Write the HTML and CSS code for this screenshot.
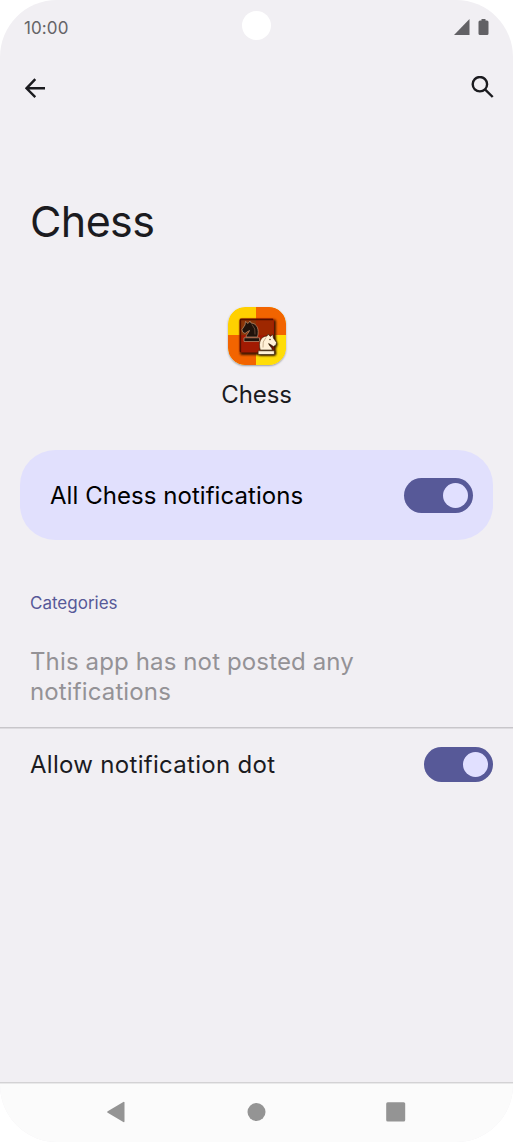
FILE: index.html
```
<!DOCTYPE html>
<html lang="en">
<head>
    <meta charset="UTF-8">
    <meta name="viewport" content="width=device-width, initial-scale=1.0">
    <title>Chess notifications</title>
    <link rel="stylesheet" href="styles.css">
</head>
<body>

<div class="phone">
    <header class="status-bar">
        <span class="clock">10:00</span>
        <span class="camera"></span>
        <svg class="status-icons" width="36" height="17" viewBox="0 0 36 17">
            <path d="M0 16 15.500 0V16z"/>
            <path d="M27.500 0h4v1.500h1.500q1.500 0 1.500 1.500v11.500q0 1.500-1.500 1.500h-7q-1.500 0-1.500-1.500V3q0-1.500 1.500-1.500h1.500z"/>
        </svg>
    </header>

    <div class="toolbar">
        <svg width="22" height="20" viewBox="0 0 22 20">
            <path d="M21 10.300H2.500M11.300 1.200 2.500 10.300l8.800 8.800"/>
        </svg>
        <svg class="search" width="23" height="23" viewBox="0 0 23 23">
            <circle cx="8.900" cy="8.200" r="7.200"/>
            <path d="M14 13.300l7.700 7.700"/>
        </svg>
    </div>

    <h1 class="title">Chess</h1>

    <div class="app">
        <svg class="app-icon" width="58" height="58" viewBox="0 0 58 58">
            <defs>
                <clipPath id="tile"><rect width="58" height="58" rx="17"/></clipPath>
                <filter id="soft" x="-30%" y="-30%" width="160%" height="160%">
                    <feGaussianBlur stdDeviation="1.2"/>
                </filter>
                <g id="knight">
                    <path d="M4 16c0-2.500 3-4 3.500-6.500l-2.500 1.500-2 1.500-2.500-1.500L0 8.500 3 4l.500-3.500 2.500 2L8 0l1 2c6 .5 8.500 6 6.500 14z"/>
                    <path d="M2 16.800h15.500v3.700H2z"/>
                </g>
            </defs>
            <g clip-path="url(#tile)">
                <rect width="58" height="58" fill="#ffd000"/>
                <rect x="28" width="30" height="28" fill="#f26400"/>
                <rect y="28" width="28" height="30" fill="#f26400"/>
                <rect x="28" y="28" width="30" height="30" fill="#ffdd08"/>
            </g>
            <rect x="12" y="12.500" width="36" height="35.500" rx="2" fill="#421400" filter="url(#soft)"/>
            <rect x="11.500" y="11.500" width="34.500" height="34" rx="2" fill="#a21a02"/>
            <path d="M28 13h17v15H28z" fill="#9e2700"/>
            <path d="M13 13h15v15H13z" fill="#8b3508"/>
            <path d="M12.500 45V12.500H45" fill="none" stroke="#531000" stroke-width="1.300"/>
            <!-- black knight -->
            <use href="#knight" transform="translate(14 14)" fill="#20120b" stroke="#cfa888" stroke-width=".600"/>
            <path d="M24 17.500q4 4 3 10" fill="none" stroke="#a57b60" stroke-width=".500"/>
            <!-- white knight -->
            <use href="#knight" transform="translate(49.500 28) scale(-1.050 1)" fill="#1e0c00" filter="url(#soft)"/>
            <use href="#knight" transform="translate(48.500 27) scale(-1.050 1)" fill="#fff1d8" stroke="#352006" stroke-width=".600"/>
            <path d="M38 30.500q-4 4-3 10" fill="none" stroke="#a18562" stroke-width=".600"/>
            <circle cx="42" cy="32.500" r=".700" fill="#352006"/>
        </svg>
        <span class="app-name">Chess</span>
    </div>

    <div class="main-switch">
        <span class="main-label">All Chess notifications</span>
        <span class="switch"></span>
    </div>

    <div class="category-title">Categories</div>
    <p class="empty">This app has not posted any<br>notifications</p>

    <div class="row">
        <span class="row-label">Allow notification dot</span>
        <span class="switch"></span>
    </div>

    <nav class="nav-bar">
        <svg width="22" height="22" viewBox="0 0 22 22"><path d="M2.700 10.200 18.300 1q1.200-.500 1.200.700v18.600q0 1.200-1.200.700L2.700 11.800q-1.300-.800 0-1.600z"/></svg>
        <svg width="22" height="22" viewBox="0 0 22 22"><circle cx="11.500" cy="11" r="9"/></svg>
        <svg width="22" height="22" viewBox="0 0 22 22"><rect x="1.200" y="1.300" width="19" height="19.300" rx="1.500"/></svg>
    </nav>
</div>

</body>
</html>
```
FILE: styles.css
```
body {
    margin: 0;
    background: #fff;
    font-family: Inter, "Open Sans", sans-serif;
    color: #1b1b1f;
}
.phone {
    display: flex;
    flex-direction: column;
    height: 1142px;
    border-radius: 57px;
    background: #f1eff3;
    overflow: hidden;
}
.status-bar {
    display: grid;
    grid-template-columns: 1fr 29px 1fr;
    align-items: center;
    height: 55px;
    padding: 0 24px;
    box-sizing: border-box;
}
.clock {
    font-size: 17px;
    color: #656467;
    letter-spacing: 0.1px;
    padding-top: 1px;
}
.camera {
    width: 29px;
    height: 29px;
    border-radius: 50%;
    background: #fff;
    margin-bottom: 4px;
}
.status-icons {
    justify-self: end;
    margin-right: -1px;
    fill: #626165;
}
.toolbar {
    display: flex;
    justify-content: space-between;
    align-items: center;
    height: 66px;
    padding: 0 19px 0 24px;
}
.toolbar svg {
    fill: none;
    stroke: #1b1b1f;
    stroke-width: 2.4;
}
.toolbar .search {
    margin-bottom: 1px;
}
.title {
    margin: 70px 30px 0;
    height: 60px;
    font-size: 43px;
    line-height: 60px;
    font-weight: 400;
    letter-spacing: -0.6px;
}
.app {
    display: flex;
    flex-direction: column;
    align-items: center;
    margin-top: 56px;
    height: 143px;
}
.app-icon {
    border-radius: 17px;
    box-shadow: 0 1px 2px rgba(0, 0, 0, 0.35);
}
.app-name {
    margin-top: 15px;
    font-size: 24px;
    line-height: 30px;
    letter-spacing: -0.1px;
}
.main-switch {
    display: flex;
    align-items: center;
    justify-content: space-between;
    height: 90px;
    margin: 0 20px;
    padding: 0 20px 0 30px;
    border-radius: 35px;
    background: #e1e0fd;
    box-sizing: border-box;
    color: #000;
}
.main-label,
.row-label {
    font-size: 24px;
    line-height: 30px;
}
.main-label {
    padding-top: 2px;
    letter-spacing: 0.05px;
}
.row-label {
    padding-top: 1px;
    letter-spacing: 0.3px;
}
.switch {
    display: flex;
    justify-content: flex-end;
    width: 69.5px;
    height: 35px;
    padding: 5px;
    border-radius: 18px;
    background: #575998;
    box-sizing: border-box;
}
.switch::after {
    content: "";
    width: 25px;
    height: 25px;
    border-radius: 50%;
    background: #e1e0ff;
}
.category-title {
    margin: 53px 30px 0;
    font-size: 17px;
    line-height: 20px;
    color: #575998;
}
.empty {
    margin: 34px 30px 0;
    height: 80px;
    font-size: 24px;
    line-height: 30px;
    letter-spacing: 0.13px;
    color: #949296;
}
.row {
    display: flex;
    align-items: center;
    justify-content: space-between;
    height: 72px;
    padding: 0 20px 0 30px;
    border-top: 1px solid #c8c6ca;
    box-shadow: inset 0 1px 0 #dddbdf;
}
.nav-bar {
    display: flex;
    align-items: center;
    justify-content: space-between;
    height: 57px;
    margin-top: auto;
    padding: 0 106px 2px 105px;
    border-top: 1px solid #d3d2d4;
    box-shadow: inset 0 1px 0 #e9e9ea;
    background: #fbfbfb;
}
.nav-bar svg {
    fill: #949494;
}
```
